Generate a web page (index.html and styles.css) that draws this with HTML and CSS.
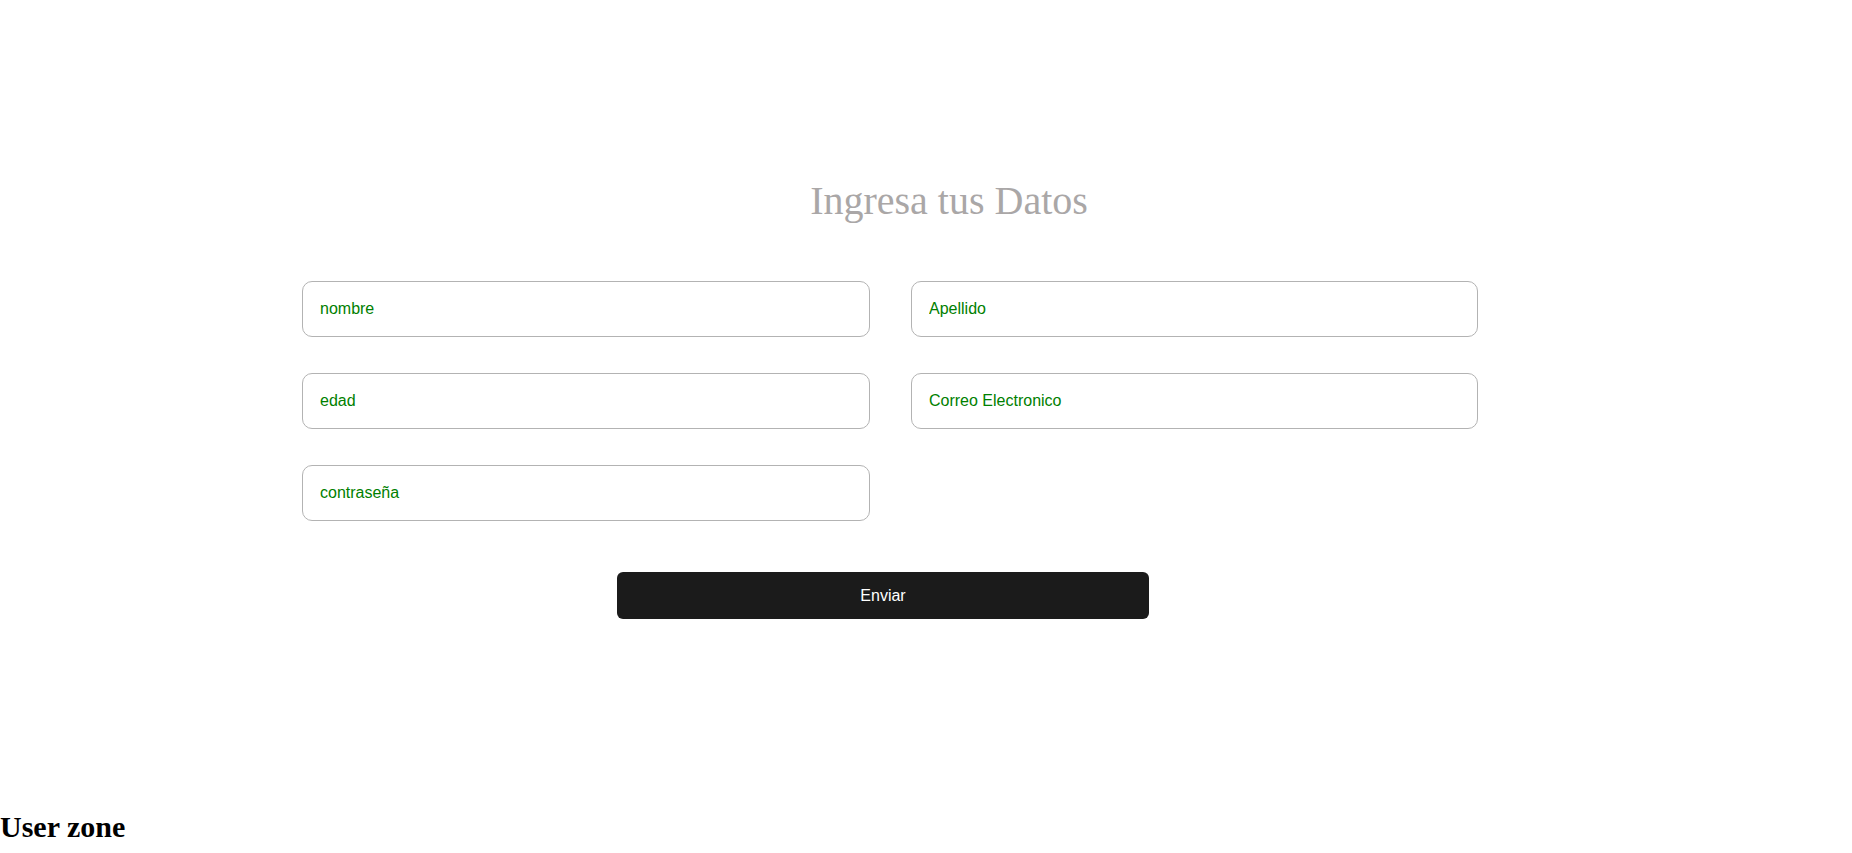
FILE: index.html
```html
<!DOCTYPE html>
<html lang="es">
<head>
<meta charset="utf-8">
<title>Ingresa tus Datos</title>
<link rel="stylesheet" href="styles.css">
</head>
<body>
<main class="page">
  <h1 class="title">Ingresa tus Datos</h1>
  <form class="form">
    <div class="grid">
      <input class="field" type="text" placeholder="nombre">
      <input class="field" type="text" placeholder="Apellido">
      <input class="field" type="text" placeholder="edad">
      <input class="field" type="text" placeholder="Correo Electronico">
      <input class="field" type="password" placeholder="contraseña">
    </div>
    <button class="submit" type="button">Enviar</button>
  </form>
</main>
<h2 class="user-zone">User zone</h2>
</body>
</html>
```
FILE: styles.css
```css
html, body {
  margin: 0;
  padding: 0;
  background: #ffffff;
  overflow: hidden;
}
body {
  font-family: "Liberation Serif", "Times New Roman", serif;
  height: 853px;
}
.page {
  padding-top: 178px;
}
.title {
  margin: 0;
  font-family: "Liberation Serif", "Times New Roman", serif;
  font-weight: normal;
  font-size: 40px;
  line-height: 46px;
  color: #aaa7a7;
  text-align: center;
  padding-left: 46px;
}
.form {
  margin: 57px 0 0 302px;
  width: 1176px;
}
.grid {
  display: grid;
  grid-template-columns: 568px 567px;
  column-gap: 41px;
  row-gap: 36px;
}
.field {
  box-sizing: border-box;
  height: 56px;
  width: 100%;
  margin: 0;
  border: 1px solid #b3b3b3;
  border-radius: 10px;
  padding: 0 17px;
  font-family: "Liberation Sans", Arial, sans-serif;
  font-size: 16px;
  color: #008000;
  background: #fff;
  outline: none;
}
.field::placeholder {
  color: #008000;
  opacity: 1;
}
.submit {
  display: block;
  box-sizing: border-box;
  margin: 51px 0 0 315px;
  width: 532px;
  height: 47px;
  padding-top: 2px;
  border: none;
  border-radius: 6px;
  background: #1b1b1b;
  color: #ffffff;
  font-family: "Liberation Sans", Arial, sans-serif;
  font-size: 16px;
  cursor: pointer;
}
.user-zone {
  margin: 191px 0 0 0;
  font-family: "Liberation Serif", "Times New Roman", serif;
  font-weight: bold;
  font-size: 30px;
  line-height: 34px;
  color: #000;
}
```
